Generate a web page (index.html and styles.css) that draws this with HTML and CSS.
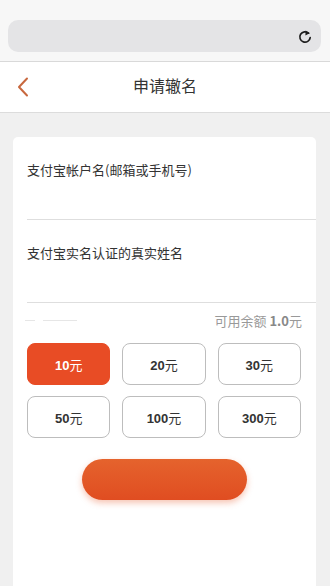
FILE: index.html
```html
<!DOCTYPE html>
<html lang="zh-CN">
<head>
    <meta charset="UTF-8">
    <meta name="viewport" content="width=device-width, initial-scale=1.0">
    <title>申请辙名</title>
    <link rel="stylesheet" href="styles.css">
</head>
<body>
    <div class="browser-bar">
        <div class="address">
            <svg class="refresh" width="14" height="15" viewBox="0 0 14 15">
                <path d="M10.6 4.2 A5.2 5.2 0 1 0 12.2 8.6" fill="none" stroke="#1e1e1e" stroke-width="1.7" stroke-linecap="round"/>
                <path d="M7.6 1.4 L11.6 4.2 L7.4 6.4 Z" fill="#1e1e1e"/>
            </svg>
        </div>
    </div>

    <div class="nav">
        <svg class="back" width="12" height="20" viewBox="0 0 12 20">
            <path d="M10 1.5 L2 10 L10 18.5" fill="none" stroke="#c8683e" stroke-width="2" stroke-linecap="round" stroke-linejoin="round"/>
        </svg>
        <h1 class="title">申请辙名</h1>
    </div>

    <div class="content">
        <div class="card">
            <div class="field">
                <label for="account">支付宝帐户名(邮箱或手机号)</label>
                <input type="text" id="account">
            </div>
            <div class="field">
                <label for="realname">支付宝实名认证的真实姓名</label>
                <input type="text" id="realname">
            </div>

            <div class="balance-row">
                <span class="faint"><i></i><i></i></span>
                <span class="balance">可用余额 <b>1.0</b>元</span>
            </div>

            <div class="amounts">
                <button class="amount active"><b>10</b>元</button>
                <button class="amount"><b>20</b>元</button>
                <button class="amount"><b>30</b>元</button>
                <button class="amount"><b>50</b>元</button>
                <button class="amount"><b>100</b>元</button>
                <button class="amount"><b>300</b>元</button>
            </div>

            <div class="submit-wrap">
                <button class="submit"></button>
            </div>
        </div>
    </div>
</body>
</html>
```

FILE: styles.css
```css
body {
    margin: 0;
    padding: 0;
    background: #f0f0f0;
    font-family: "Noto Sans CJK SC", "Noto Sans", sans-serif;
    color: #333;
    height: 586px;
    overflow: hidden;
}

.browser-bar {
    background: #f7f7f7;
    padding: 20px 9px 9px 8px;
    border-bottom: 1px solid #d9d9d9;
}

.address {
    height: 32px;
    background: #e4e4e6;
    border-radius: 10px;
    display: flex;
    justify-content: flex-end;
    align-items: center;
    padding-right: 9px;
}

.nav {
    height: 50px;
    background: #fff;
    border-bottom: 1px solid #dcdcdc;
    display: flex;
    align-items: center;
    position: relative;
}

.back {
    margin-left: 17px;
}

.title {
    position: absolute;
    left: 0;
    right: 0;
    margin: 0;
    padding-bottom: 5px;
    text-align: center;
    font-size: 16px;
    font-weight: normal;
    color: #333;
}

.content {
    padding: 24px 14px 0 13px;
}

.card {
    background: #fff;
    border-radius: 5px;
    padding: 0 0 0 14px;
    height: 470px;
}

.field {
    border-bottom: 1px solid #dedede;
    padding-top: 25px;
    height: 57px;
}

.field label {
    display: block;
    font-size: 13px;
    line-height: 16px;
    color: #333;
}

.field input {
    border: none;
    outline: none;
    width: 100%;
    height: 30px;
    padding: 0;
    background: transparent;
}

.balance-row {
    display: flex;
    justify-content: space-between;
    align-items: center;
    height: 34px;
    padding-right: 14px;
}

.faint {
    display: flex;
    gap: 8px;
    margin-left: -2px;
}

.faint i {
    display: block;
    width: 10px;
    border-top: 1px solid #e6e6e6;
}

.faint i + i {
    width: 34px;
}

.balance {
    font-size: 13px;
    color: #999;
}

.balance b {
    color: #888;
}

.amounts {
    display: grid;
    grid-template-columns: repeat(3, 1fr);
    column-gap: 12px;
    row-gap: 11px;
    margin-top: 6px;
    padding-right: 15px;
}

.amount {
    height: 42px;
    background: #fff;
    border: 1px solid #bdbdbd;
    border-radius: 8px;
    font-family: inherit;
    font-size: 13px;
    color: #333;
    padding: 0;
}

.amount b {
    font-family: "Liberation Sans", sans-serif;
}

.amount.active {
    background: #e84c25;
    border-color: #e84c25;
    color: #fff;
}

.submit-wrap {
    display: flex;
    justify-content: center;
    padding-right: 15px;
    margin-top: 21px;
}

.submit {
    width: 165px;
    height: 41px;
    border: none;
    border-radius: 21px;
    background: linear-gradient(#e5632d, #e04d21);
    box-shadow: 0 3px 6px rgba(232, 90, 40, 0.35);
}
```
